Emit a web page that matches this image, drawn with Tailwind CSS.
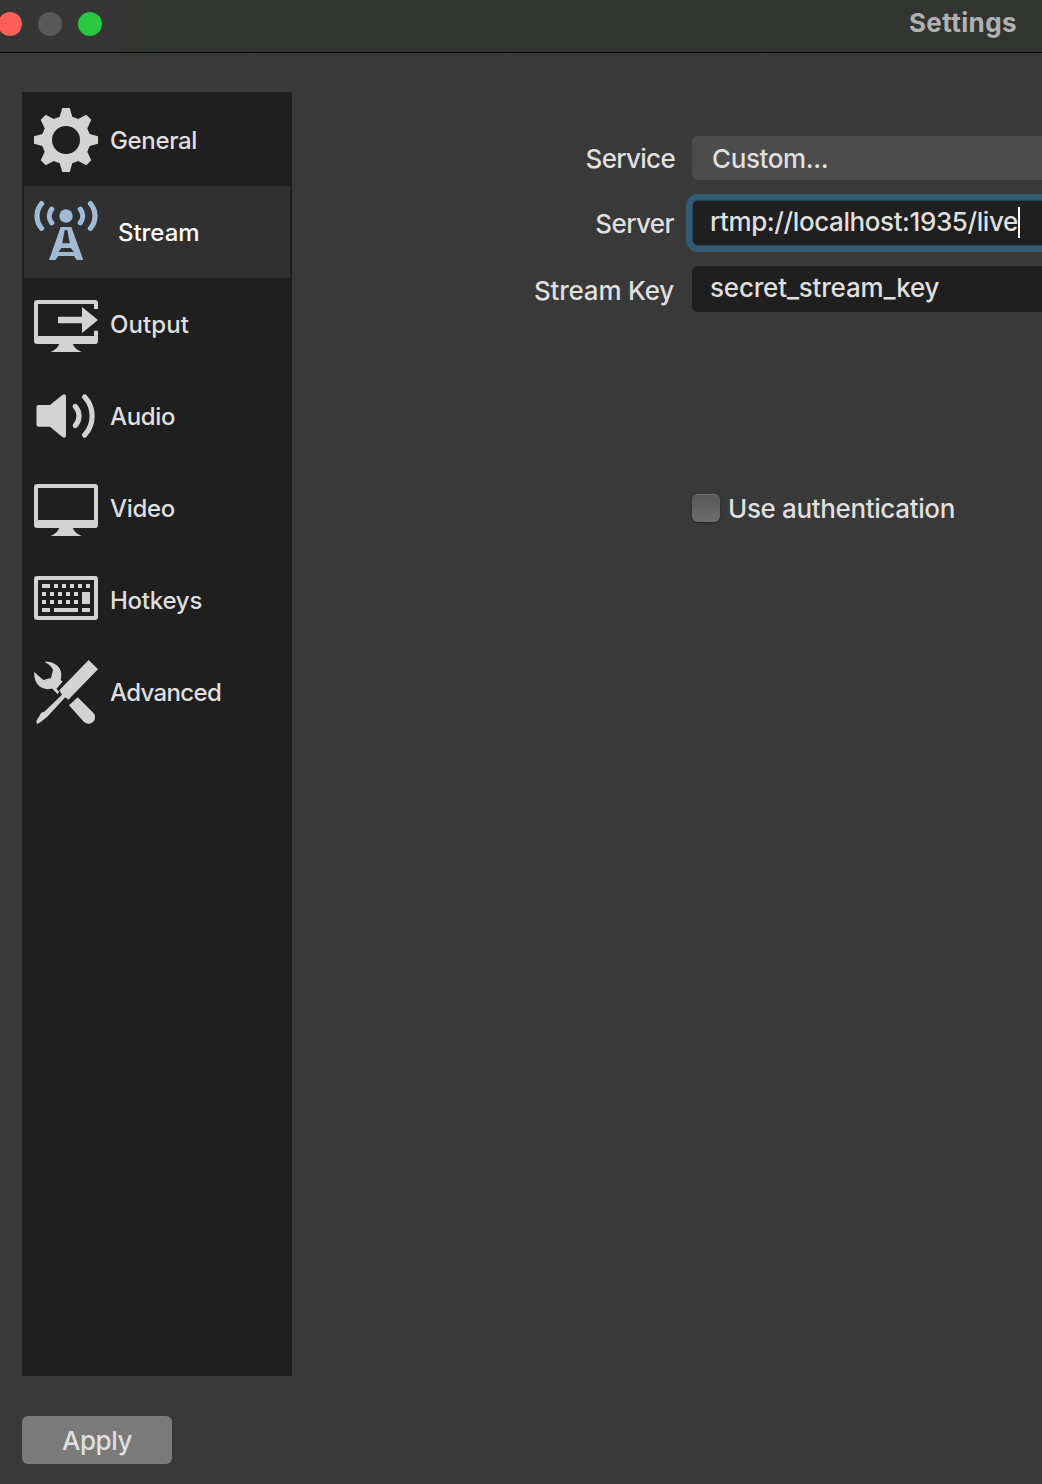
<!DOCTYPE html>
<html lang="en">
<head>
<meta charset="utf-8">
<title>Settings</title>
<script src="https://cdn.jsdelivr.net/npm/@tailwindcss/browser@4"></script>
</head>
<body class="flex h-[1484px] w-[1042px] flex-col overflow-hidden bg-[#393939] font-['Inter',sans-serif] font-[450] text-[#dfdfdf]">
<header class="flex h-[53px] shrink-0 justify-between border-b border-black bg-linear-to-r from-[#353535] from-10% to-[#323431] to-15% pr-[25px]">
  <div class="-ml-0.5 mt-3 flex gap-4">
    <span class="size-6 rounded-full bg-[#ff5f57]"></span>
    <span class="size-6 rounded-full bg-[#585958]"></span>
    <span class="size-6 rounded-full bg-[#28c840]"></span>
  </div>
  <h1 class="mt-[7px] text-[26px] leading-8 font-bold tracking-[0.4px] text-[#b0b1b0]">Settings</h1>
</header>

<main class="flex pt-[39px] pl-[22px]">
  <nav class="flex h-[1284px] w-[270px] shrink-0 flex-col bg-[#1f1f1f] p-0.5 text-[24px]">
    <a class="flex h-[92px] items-center gap-3 pl-2.5">
      <svg class="size-16" viewBox="0 0 64 64" fill="#d3d3d3"><path fill-rule="evenodd" d="M28.3 0h7.4l2.6 8.7 6 2.3 8-4.3 5 5-4 8.7 2.4 5.7 8.3 2.2v7.4l-8.3 2.4-2.4 5.6 4 8.6-5 5-8-4.3-6 2.3-2.6 8.7h-7.4l-2.6-8.7-6-2.3-8 4.3-5-5 4-8.600-2.400-5.600L0 35.700v-7.400l8.300-2.200 2.400-5.700-4-8.700 5-5 8 4.300 6-2.300zM32 18a14 14 0 1 0 0 28a14 14 0 1 0 0-28z"/></svg>
      <span class="pt-0.5 tracking-[-0.35px]">General</span>
    </a>
    <a class="flex h-[92px] items-center gap-5 bg-[#303030] pl-2.5 text-white">
      <svg class="size-16" viewBox="0 0 64 64" fill="#a1bbd7"><circle cx="32" cy="16" r="6.7"/><g fill="none" stroke="#a1bbd7" stroke-width="5.2" stroke-linecap="round"><path d="M7.600 3.600A19 19 0 0 0 7.600 28.400M56.400 3.600A19 19 0 0 1 56.400 28.400M17.700 9.200A11 11 0 0 0 17.700 22.800M46.300 9.200A11 11 0 0 1 46.300 22.800"/></g><path fill-rule="evenodd" d="M26.700 27h10.600L49.300 60h-6.600l-2.700-4H24.300l-2.900 4H15zM30.700 30L28.200 43.300h7.600L33.300 30zM27.500 48l-3.200 4H40l-3.300-4z"/></svg>
      <span class="pt-0.5 tracking-[-0.05px]">Stream</span>
    </a>
    <a class="flex h-[92px] items-center gap-3 pl-2.5">
      <svg class="size-16" viewBox="0 0 64 64" fill="#d3d3d3"><path d="M3 8h58a3 3 0 0 1 3 3v6h-4v-5H4v32h56v-5.300h4V49a3 3 0 0 1-3 3H38.700q2.500 5.500 9 8h-31q6.100-2.500 8.600-8H3a3 3 0 0 1-3-3V11a3 3 0 0 1 3-3zM24 24.700h24V15l16 13-16 13v-9.700H24z"/></svg>
      <span class="pt-0.5 tracking-[0.1px]">Output</span>
    </a>
    <a class="flex h-[92px] items-center gap-3 pl-2.5">
      <svg class="size-16" viewBox="0 0 64 64" fill="#d3d3d3"><path d="M4.500 21H16L28 11.200Q32 8.500 32 13v38q0 4.500-4 1.800L16 42.700H4.500a2 2 0 0 1-2-2V23a2 2 0 0 1 2-2z"/><g fill="none" stroke="#d3d3d3" stroke-width="5.2" stroke-linecap="round"><path d="M41.300 22.500A14 14 0 0 1 41.300 41.500M50.700 13A28 28 0 0 1 50.700 51"/></g></svg>
      <span class="pt-0.5 tracking-[-0.35px]">Audio</span>
    </a>
    <a class="flex h-[92px] items-center gap-3 pl-2.5">
      <svg class="size-16" viewBox="0 0 64 64" fill="#d3d3d3"><path fill-rule="evenodd" d="M3 8h58a3 3 0 0 1 3 3v38a3 3 0 0 1-3 3H38.700q2.500 5.500 9 8h-31q6.100-2.500 8.600-8H3a3 3 0 0 1-3-3V11a3 3 0 0 1 3-3zM4 12v32h56V12z"/></svg>
      <span class="pt-0.5 tracking-[-0.3px]">Video</span>
    </a>
    <a class="flex h-[92px] items-center gap-3 pl-2.5">
      <svg class="size-16" viewBox="0 0 64 64" fill="#d3d3d3"><path fill-rule="evenodd" d="M3 8h58a3 3 0 0 1 3 3v38a3 3 0 0 1-3 3H3a3 3 0 0 1-3-3V11a3 3 0 0 1 3-3zM4 12v36h56V12z"/><path d="M8 16h8v4H8zM20 16h4v4h-4zM28 16h4v4h-4zM36 16h4v4h-4zM44 16h4v4h-4zM52 16h4v4h-4zM8 24h4v4H8zM16 24h4v4h-4zM24 24h4v4h-4zM32 24h4v4h-4zM40 24h4v4h-4zM48 24h8v12h-8zM8 32h4v4H8zM16 32h4v4h-4zM24 32h4v4h-4zM32 32h4v4h-4zM40 32h4v4h-4zM8 40h8v4H8zM20 40h24v4H20zM48 40h8v4h-8z"/></svg>
      <span class="pt-0.5 tracking-[-0.25px]">Hotkeys</span>
    </a>
    <a class="flex h-[92px] items-center gap-3 pl-2.5">
      <svg class="size-16" viewBox="0 0 64 64" fill="#d3d3d3"><path d="M54.700 0L64 9.300 34.300 39.700 31.300 37.300 13.300 56.700 6 62.500 3 64 2.300 61 7.300 52.700 10.500 51.500 28 34.700 25.300 30.300z"/><path d="M35 45.300L43.700 37.300 59 52.500A6.500 6.500 0 0 1 50 62z"/><path d="M10.700 2C19 .5 27.500 7 27.300 14.500Q27.300 18 26.500 19.800L28.500 21.700 22.500 28.800 25.200 32.300 23.300 34 19 29.300 18 28.500C9 31.500-.5 25 .2 12L9.300 20 17 18 19 10Q17 5 10.700 2z"/></svg>
      <span class="pt-0.5 tracking-[-0.65px]">Advanced</span>
    </a>
  </nav>

  <section class="flex grow flex-col pt-11 text-[26px] leading-8">
    <div class="flex h-11 items-center">
      <label class="w-[383px] pt-0.5 text-right tracking-[-0.7px]">Service</label>
      <div class="ml-[17px] flex h-11 grow items-center rounded-l-md bg-[#4c4c4c] pt-0.5 pl-5 tracking-[-0.4px]">Custom...</div>
    </div>
    <div class="mt-5 flex h-[46px] items-center">
      <label class="w-[382px] pt-0.5 text-right tracking-[-0.6px]">Server</label>
      <div class="ml-[18px] flex h-[46px] grow items-center rounded-l-md border border-r-0 border-[#1f475f] bg-[#1f1f1f] pl-[17px] shadow-[0_0_0_6px_#325b74]"><span class="-mt-0.5 tracking-[-0.41px]">rtmp://localhost:1935/live</span><span class="-mt-0.5 h-[31px] w-0.5 bg-white"></span></div>
    </div>
    <div class="mt-5 flex h-[46px] items-center">
      <label class="w-[382px] pt-1 text-right tracking-[-0.2px]">Stream Key</label>
      <div class="ml-[18px] flex h-[46px] grow items-center rounded-l-md bg-[#1f1f1f] pl-[18px]"><span class="-mt-0.5 tracking-[-0.18px]">secret_stream_key</span></div>
    </div>
    <label class="mt-[182px] ml-[400px] flex h-7 items-center gap-2">
      <span class="size-7 rounded-md border-t border-[#747474] bg-linear-to-b from-[#585858] to-[#6d6d6d] shadow-[0_1px_2px_#0006]"></span>
      <span class="pt-0.5 tracking-[-0.36px]">Use authentication</span>
    </label>
  </section>
</main>

<footer class="mt-10 pl-[22px]">
  <button class="flex h-12 w-[150px] items-center justify-center rounded-md bg-[#7a7a7a] text-[26px] tracking-[-0.5px]">Apply</button>
</footer>
</body>
</html>
